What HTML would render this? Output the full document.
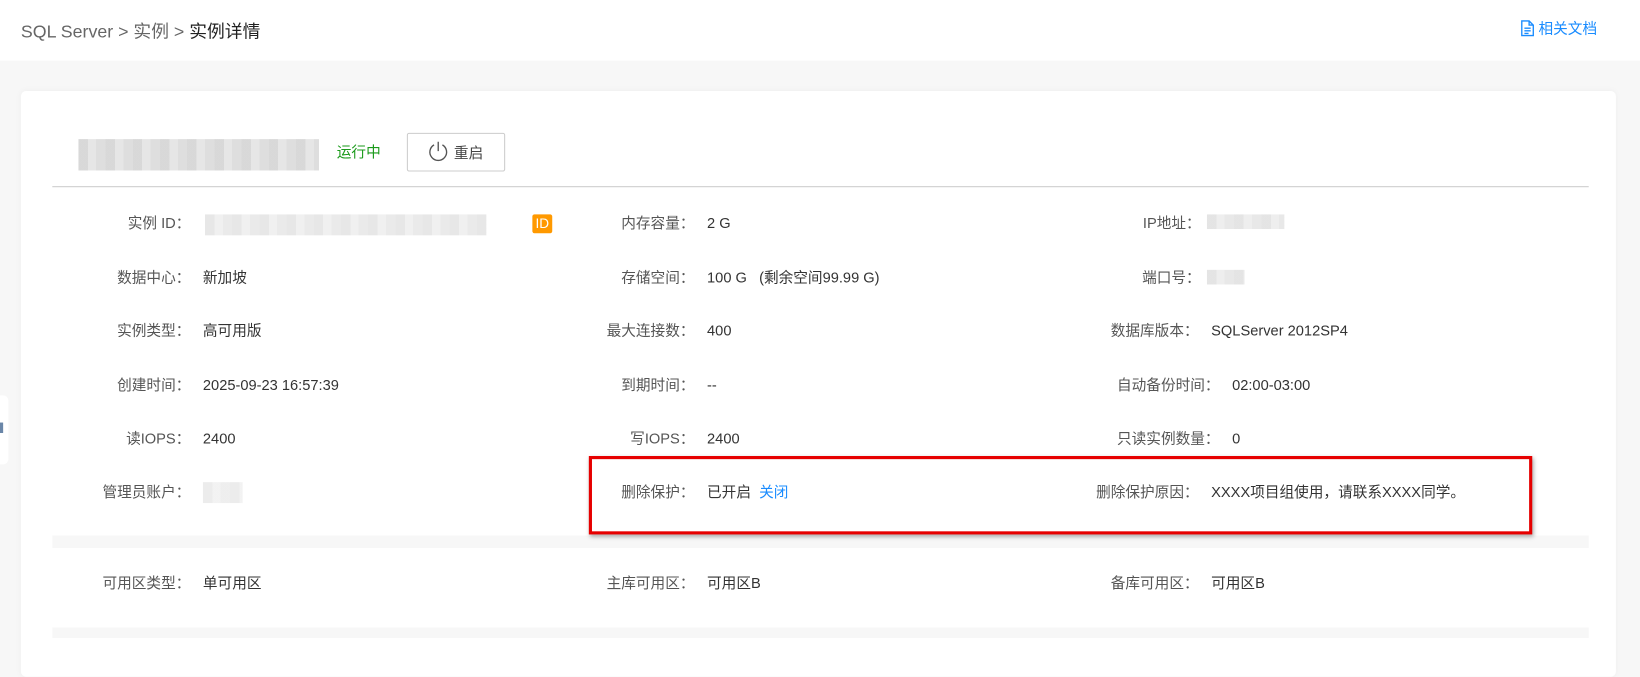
<!DOCTYPE html>
<html><head><meta charset="utf-8"><style>
*{margin:0;padding:0;box-sizing:border-box}
html,body{width:1640px;height:637px;overflow:hidden}
body{background:#f7f7f7;font-family:"Liberation Sans","Noto Sans CJK SC",sans-serif;color:#333}
#w{position:absolute;left:0;top:0;width:1568px;height:609px;transform:scale(1.0459);transform-origin:0 0}
.hdr{position:absolute;left:0;top:0;width:1568px;height:58px;background:#fff}
.bc{position:absolute;left:20px;top:16px;font-size:17px;color:#666}
.bc b{font-weight:normal;color:#222}
.doc{position:absolute;left:1454px;top:17px;font-size:14px;color:#1a8cff}
.card{position:absolute;left:20px;top:87px;width:1525px;height:560px;background:#fff;border-radius:5px;box-shadow:0 0 6px rgba(0,0,0,.04)}
.a{position:absolute;font-size:14px;line-height:18px;white-space:nowrap}
.l{color:#555;text-align:right}
.v{color:#333}
.blur{position:absolute;background:repeating-linear-gradient(90deg,#cfcfcf 0 9px,#e0e0e0 9px 17px,#d6d6d6 17px 26px);opacity:.8}
</style></head><body><div id="w">
<div class="hdr"></div>
<div class="bc">SQL Server &gt; 实例 &gt; <b>实例详情</b></div>
<div class="doc"><svg width="13" height="16" viewBox="0 0 13 16" style="vertical-align:-3px;margin-right:4px"><path d="M1 1h7l4 4v10H1z M8 1v4h4 M3.5 8h6 M3.5 10.5h6 M3.5 13h4" fill="none" stroke="#1a8cff" stroke-width="1.3"/></svg>相关文档</div>
<div style="position:absolute;left:0;top:378px;width:8px;height:66px;background:#fff;border-radius:0 5px 5px 0"></div>
<div style="position:absolute;left:0;top:404px;width:3px;height:10px;background:#6a86a8"></div>
<div class="card"></div>
<div class="blur" style="left:75px;top:133px;width:230px;height:30px"></div>
<div class="a" style="left:322px;top:136px;color:#1a9a1a">运行中</div>
<div style="position:absolute;left:389px;top:127px;width:94px;height:37px;border:1px solid #ccc;border-radius:2px;background:#fff"></div>
<svg style="position:absolute;left:408px;top:134px" width="22" height="22" viewBox="0 0 22 22"><path d="M7 4.5A8 8 0 1 0 15 4.5" fill="none" stroke="#555" stroke-width="1.3"/><path d="M11 1.5v9" stroke="#555" stroke-width="1.3"/></svg>
<div class="a" style="left:434px;top:137px;color:#444">重启</div>
<div style="position:absolute;left:50px;top:178px;width:1469px;height:1px;background:#ccc"></div>

<div class="a l" style="right:calc(1568px - 182px);top:204px">实例 ID：</div>
<div class="blur" style="left:196px;top:205px;width:269px;height:20px;opacity:.5"></div>
<div style="position:absolute;left:509px;top:205px;width:19px;height:18px;background:#f90;border-radius:2px;color:#fff;font-size:13px;line-height:18px;text-align:center">ID</div>
<div class="a l" style="right:calc(1568px - 664px);top:204px">内存容量：</div><div class="a v" style="left:676px;top:204px">2 G</div>
<div class="a l" style="right:calc(1568px - 1148px);top:204px">IP地址：</div>
<div class="blur" style="left:1154px;top:205px;width:74px;height:14px;opacity:.55"></div>

<div class="a l" style="right:calc(1568px - 182px);top:256px">数据中心：</div><div class="a v" style="left:194px;top:256px">新加坡</div>
<div class="a l" style="right:calc(1568px - 664px);top:256px">存储空间：</div><div class="a v" style="left:676px;top:256px">100 G&nbsp;&nbsp; (剩余空间99.99 G)</div>
<div class="a l" style="right:calc(1568px - 1148px);top:256px">端口号：</div>
<div class="blur" style="left:1154px;top:258px;width:36px;height:14px;opacity:.55"></div>

<div class="a l" style="right:calc(1568px - 182px);top:307px">实例类型：</div><div class="a v" style="left:194px;top:307px">高可用版</div>
<div class="a l" style="right:calc(1568px - 664px);top:307px">最大连接数：</div><div class="a v" style="left:676px;top:307px">400</div>
<div class="a l" style="right:calc(1568px - 1146px);top:307px">数据库版本：</div><div class="a v" style="left:1158px;top:307px">SQLServer 2012SP4</div>

<div class="a l" style="right:calc(1568px - 182px);top:359px">创建时间：</div><div class="a v" style="left:194px;top:359px">2025-09-23 16:57:39</div>
<div class="a l" style="right:calc(1568px - 664px);top:359px">到期时间：</div><div class="a v" style="left:676px;top:359px">--</div>
<div class="a l" style="right:calc(1568px - 1166px);top:359px">自动备份时间：</div><div class="a v" style="left:1178px;top:359px">02:00-03:00</div>

<div class="a l" style="right:calc(1568px - 182px);top:410px">读IOPS：</div><div class="a v" style="left:194px;top:410px">2400</div>
<div class="a l" style="right:calc(1568px - 664px);top:410px">写IOPS：</div><div class="a v" style="left:676px;top:410px">2400</div>
<div class="a l" style="right:calc(1568px - 1166px);top:410px">只读实例数量：</div><div class="a v" style="left:1178px;top:410px">0</div>

<div class="a l" style="right:calc(1568px - 182px);top:461px">管理员账户：</div>
<div class="blur" style="left:194px;top:461px;width:38px;height:20px;opacity:.4"></div>
<div class="a l" style="right:calc(1568px - 664px);top:461px">删除保护：</div><div class="a v" style="left:676px;top:461px">已开启&nbsp;&nbsp;<span style="color:#1a8cff">关闭</span></div>
<div class="a l" style="right:calc(1568px - 1146px);top:461px">删除保护原因：</div><div class="a v" style="left:1158px;top:461px">XXXX项目组使用，请联系XXXX同学。</div>

<div style="position:absolute;left:50px;top:512px;width:1469px;height:12px;background:#f7f7f7"></div>
<div style="position:absolute;left:563px;top:436px;width:902px;height:75px;border:3px solid #e60000;box-shadow:1px 2px 4px rgba(0,0,0,.35)"></div>

<div class="a l" style="right:calc(1568px - 182px);top:548px">可用区类型：</div><div class="a v" style="left:194px;top:548px">单可用区</div>
<div class="a l" style="right:calc(1568px - 664px);top:548px">主库可用区：</div><div class="a v" style="left:676px;top:548px">可用区B</div>
<div class="a l" style="right:calc(1568px - 1146px);top:548px">备库可用区：</div><div class="a v" style="left:1158px;top:548px">可用区B</div>
<div style="position:absolute;left:50px;top:600px;width:1469px;height:10px;background:#f7f7f7"></div>
</div></body></html>
